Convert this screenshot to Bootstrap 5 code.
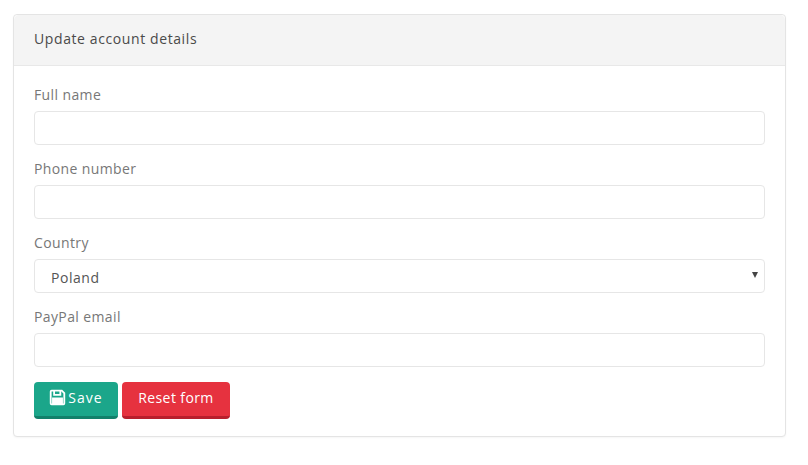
<!DOCTYPE html>
<html lang="en">
<head>
  <meta charset="UTF-8" />
  <meta name="viewport" content="width=device-width, initial-scale=1.0" />
  <title>Update account details</title>
  <link href="https://cdn.jsdelivr.net/npm/bootstrap@5.3.2/dist/css/bootstrap.min.css" rel="stylesheet">
  <style>
    body { background: #fff; font-family: "Open Sans", Inter, sans-serif; font-size: 14px; color: #6c6c6c; }
    .page-wrap { padding: 14px 22px 28px 13px; }
    .acct-card { border: 1px solid #e4e4e4; border-radius: 4px; box-shadow: 0 1px 2px rgba(0,0,0,.04); }
    .acct-card .card-header { background: #f4f4f4; border-bottom: 1px solid #e8e8e8; color: #4a4a4a; font-size: 14px; letter-spacing: .6px; height: 51px; line-height: 47px; padding: 0 20px; }
    .acct-card .card-body { padding: 18px 20px 17px; }
    .field { margin-bottom: 13px; }
    .field .form-label { font-size: 14px; letter-spacing: .38px; line-height: 21px; margin-bottom: 6px; color: #777; display: block; }
    .field .form-control, .field .form-select { height: 34px; min-height: 34px; padding: 2px 16px 0; font-size: 14px; letter-spacing: .55px; color: #555; border: 1px solid #e6e6e6; border-radius: 4px; box-shadow: none; }
    .field .form-select { background-image: none; }
    .select-wrap { position: relative; }
    .select-caret { position: absolute; right: 7px; top: 13px; width: 0; height: 0; border-left: 3px solid transparent; border-right: 3px solid transparent; border-top: 6px solid #444; }
    .btn-row { margin-top: 15px; gap: 4px; }
    .btn-row .btn { height: 37px; padding: 0 14px 2px; font-size: 14px; font-weight: 500; letter-spacing: .4px; line-height: 1; color: #fff; border: 0; border-radius: 4px; display: inline-flex; align-items: center; justify-content: center; gap: 2px; }
    .btn-row .btn-save { width: 84px; letter-spacing: 1px; background: #1ba68a; border-bottom: 3px solid #12806a; }
    .btn-row .btn-reset { width: 108px; background: #e6323f; border-bottom: 3px solid #b81f2c; }
    .save-icon { margin-top: -2px; }
  </style>
</head>
<body>
  <div class="page-wrap">
    <div class="card acct-card">
      <div class="card-header">Update account details</div>
      <div class="card-body">
        <form>
          <div class="field">
            <label class="form-label" for="fullName">Full name</label>
            <input type="text" class="form-control" id="fullName">
          </div>
          <div class="field">
            <label class="form-label" for="phone">Phone number</label>
            <input type="text" class="form-control" id="phone">
          </div>
          <div class="field">
            <label class="form-label" for="country">Country</label>
            <div class="select-wrap">
              <select class="form-select" id="country"><option>Poland</option></select>
              <span class="select-caret"></span>
            </div>
          </div>
          <div class="field">
            <label class="form-label" for="paypal">PayPal email</label>
            <input type="email" class="form-control" id="paypal">
          </div>
          <div class="d-flex btn-row">
            <button type="button" class="btn btn-save">
              <svg class="save-icon" width="17" height="17" viewBox="0 0 15 15" fill="none" stroke="#fff" stroke-width="1.6"><path d="M1.500 2.300c0-.5.3-.8.8-.8h9l2.200 2.200v9c0 .5-.3.8-.8.8H2.300c-.5 0-.8-.3-.8-.8z"/><path d="M4.500 1.500v3.700h5.500V1.500"/><path d="M3.500 13.500V8.300h8v5.200" fill="#fff"/></svg>
              Save</button>
            <button type="reset" class="btn btn-reset">Reset form</button>
          </div>
        </form>
      </div>
    </div>
  </div>
</body>
</html>
